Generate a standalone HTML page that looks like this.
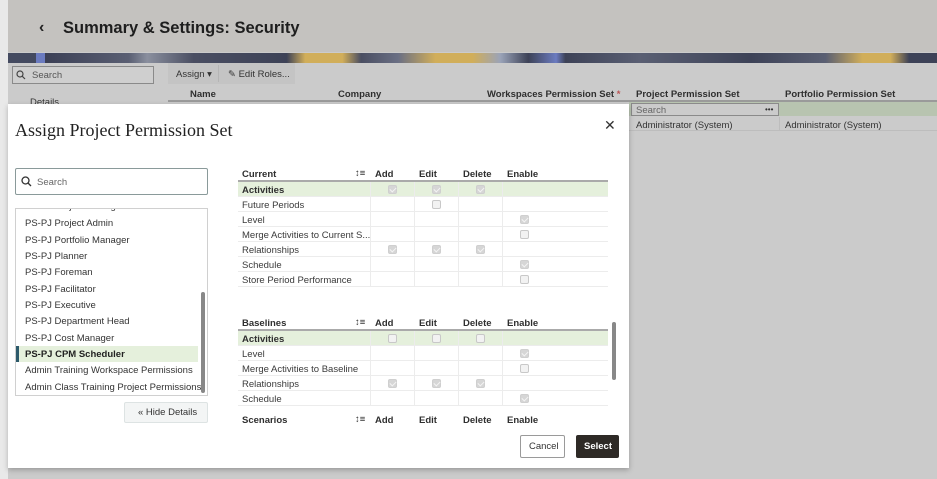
<!DOCTYPE html>
<html><head><meta charset="utf-8"><style>
*{box-sizing:border-box;margin:0;padding:0}
body{width:937px;height:479px;overflow:hidden;background:#cbcbcb;font-family:"Liberation Sans",sans-serif;position:relative}
.a{position:absolute}
.t{font-size:9.5px;color:#3a3a3a;white-space:nowrap}
.b{font-weight:bold;color:#2f2f2f}
.cb{position:absolute;width:9px;height:9px;border:1px solid #c8c8c8;border-radius:2px;background:#f2f2f2}
.cb.k{background:#d6d6d6;border-color:#cfcfcf}
.cb.k:after{content:"";position:absolute;left:2px;top:0px;width:3px;height:5px;border:solid #f4f4f4;border-width:0 1.3px 1.3px 0;transform:rotate(45deg)}
.row{position:absolute;left:238px;width:370px;height:15px;border-bottom:1px solid #ececec}
.li{position:absolute;left:25px;font-size:9.5px;color:#333;white-space:nowrap}
</style></head><body>
<div class="a" style="left:0;top:0;width:8px;height:479px;background:#e9e9e9"></div>
<div class="a" style="left:8px;top:0;width:929px;height:52px;background:#c4c2bf"></div>
<div class="a" style="left:39px;top:19px;font-size:16px;font-weight:bold;color:#222">‹</div>
<div class="a" style="left:63px;top:19px;font-size:16.5px;font-weight:bold;color:#1e1e1e">Summary &amp; Settings: Security</div>
<div class="a" style="left:8px;top:53px;width:929px;height:10px;background:linear-gradient(90deg,#444a60 0,#444a60 3%,#6b7bc0 3%,#6b7bc0 4%,#3b3f55 4%,#5a5f73 13%,#8a8f9e 15%,#4a4e62 20%,#3d4257 30%,#d1ae5a 32%,#d1ae5a 36%,#4a4e62 38%,#6a6f84 42%,#d1ae5a 46%,#d1ae5a 50%,#9aa3b8 53%,#3d4257 56%,#6b7bc0 59%,#3d4257 60%,#5a5f73 68%,#3d4257 80%,#5a5f73 88%,#d1ae5a 92%,#d1ae5a 95%,#3d4257 97%)"></div>
<div class="a" style="left:12px;top:66px;width:142px;height:18px;border:1px solid #8a8a8a;background:#cfcfcf"></div>
<svg class="a" style="left:16px;top:70px" width="10" height="10"><circle cx="4" cy="4" r="3" fill="none" stroke="#444" stroke-width="1.2"/><line x1="6.2" y1="6.2" x2="9" y2="9" stroke="#444" stroke-width="1.2"/></svg>
<div class="a t" style="left:32px;top:70px;color:#555">Search</div>
<div class="a" style="left:168px;top:63px;width:127px;height:21px;background:#c4c4c4"></div>
<div class="a t" style="left:176px;top:69px;color:#333">Assign ▾</div>
<div class="a" style="left:218px;top:65px;width:1px;height:17px;background:#b5b5b5"></div>
<div class="a t" style="left:228px;top:69px;color:#333">✎ Edit Roles...</div>
<div class="a t" style="left:30px;top:97px;color:#333">Details</div>
<div class="a t b" style="left:190px;top:89px">Name</div>
<div class="a t b" style="left:338px;top:89px">Company</div>
<div class="a t b" style="left:487px;top:89px">Workspaces Permission Set <span style="color:#b55">*</span></div>
<div class="a t b" style="left:636px;top:89px">Project Permission Set</div>
<div class="a t b" style="left:785px;top:89px">Portfolio Permission Set</div>
<div class="a" style="left:168px;top:100px;width:769px;height:2px;background:#9a9a9a"></div>
<div class="a" style="left:629px;top:102px;width:308px;height:14px;background:#b8c4b0"></div>
<div class="a" style="left:631px;top:103px;width:148px;height:13px;border:1px solid #8a8a8a;background:#cbcbcb"></div>
<div class="a t" style="left:636px;top:105px;color:#666">Search</div>
<div class="a t" style="left:765px;top:105px;color:#333;font-size:8px">•••</div>
<div class="a" style="left:629px;top:117px;width:308px;height:14px;border-bottom:1px solid #bdbdbd"></div>
<div class="a t" style="left:636px;top:120px;color:#333">Administrator (System)</div>
<div class="a t" style="left:785px;top:120px;color:#333">Administrator (System)</div>
<div class="a" style="left:779px;top:117px;width:1px;height:14px;background:#bdbdbd"></div>

<!-- modal -->
<div class="a" style="left:8px;top:104px;width:621px;height:364px;background:#fff;box-shadow:0 2px 5px rgba(0,0,0,.25)"></div>
<div class="a" style="left:15px;top:120px;font-family:'Liberation Serif',serif;font-size:18px;color:#222">Assign Project Permission Set</div>
<div class="a" style="left:604px;top:117px;font-size:14px;color:#333">✕</div>

<div class="a" style="left:15px;top:168px;width:193px;height:27px;border:1px solid #8a9a9a;border-radius:2px"></div>
<svg class="a" style="left:21px;top:176px" width="11" height="11"><circle cx="4.5" cy="4.5" r="3.5" fill="none" stroke="#333" stroke-width="1.3"/><line x1="7" y1="7" x2="10" y2="10" stroke="#333" stroke-width="1.3"/></svg>
<div class="a t" style="left:37px;top:177px;color:#666">Search</div>

<div class="a" style="left:15px;top:208px;width:193px;height:188px;border:1px solid #d0d0d0;overflow:hidden">
<div class="li" style="left:9px;top:-8px">PS-PJ Project Manager</div>
</div>
<div class="li" style="top:218px">PS-PJ Project Admin</div>
<div class="li" style="top:235px">PS-PJ Portfolio Manager</div>
<div class="li" style="top:251px">PS-PJ Planner</div>
<div class="li" style="top:267px">PS-PJ Foreman</div>
<div class="li" style="top:284px">PS-PJ Facilitator</div>
<div class="li" style="top:300px">PS-PJ Executive</div>
<div class="li" style="top:316px">PS-PJ Department Head</div>
<div class="li" style="top:333px">PS-PJ Cost Manager</div>
<div class="a" style="left:16px;top:346px;width:182px;height:16px;background:#e5f0dc;border-left:3px solid #2d5a6b"></div>
<div class="li" style="top:349px;font-weight:bold;color:#222">PS-PJ CPM Scheduler</div>
<div class="li" style="top:365px">Admin Training Workspace Permissions</div>
<div class="li" style="top:382px">Admin Class Training Project Permissions</div>
<div class="a" style="left:201px;top:292px;width:4px;height:101px;background:#888;border-radius:2px"></div>

<div class="a" style="left:124px;top:402px;width:84px;height:21px;border:1px solid #dde3e3;background:#f3f5f5;border-radius:2px"></div>
<div class="a t" style="left:138px;top:407px;color:#333">« Hide Details</div>

<!-- Current table -->
<div class="a t b" style="left:242px;top:169px">Current</div>
<div class="a t" style="left:355px;top:168px;color:#333">↕≡</div>
<div class="a t b" style="left:375px;top:169px">Add</div>
<div class="a t b" style="left:419px;top:169px">Edit</div>
<div class="a t b" style="left:463px;top:169px">Delete</div>
<div class="a t b" style="left:507px;top:169px">Enable</div>
<div class="a" style="left:238px;top:180px;width:370px;height:2px;background:#aaa"></div>
<div class="a" style="left:238px;top:182px;width:370px;height:15px;background:#e5f0dc"></div>
<div class="row" style="top:182px"></div>
<div class="row" style="top:197px"></div>
<div class="row" style="top:212px"></div>
<div class="row" style="top:227px"></div>
<div class="row" style="top:242px"></div>
<div class="row" style="top:257px"></div>
<div class="row" style="top:272px"></div>
<div class="a" style="left:370px;top:182px;width:1px;height:105px;background:#ececec"></div>
<div class="a" style="left:414px;top:182px;width:1px;height:105px;background:#ececec"></div>
<div class="a" style="left:458px;top:182px;width:1px;height:105px;background:#ececec"></div>
<div class="a" style="left:502px;top:182px;width:1px;height:105px;background:#ececec"></div>
<div class="a t b" style="left:242px;top:185px">Activities</div>
<div class="a t" style="left:242px;top:200px">Future Periods</div>
<div class="a t" style="left:242px;top:215px">Level</div>
<div class="a t" style="left:242px;top:230px">Merge Activities to Current S...</div>
<div class="a t" style="left:242px;top:245px">Relationships</div>
<div class="a t" style="left:242px;top:260px">Schedule</div>
<div class="a t" style="left:242px;top:275px">Store Period Performance</div>
<div class="cb k" style="left:388px;top:185px"></div><div class="cb k" style="left:432px;top:185px"></div><div class="cb k" style="left:476px;top:185px"></div>
<div class="cb" style="left:432px;top:200px"></div>
<div class="cb k" style="left:520px;top:215px"></div>
<div class="cb" style="left:520px;top:230px"></div>
<div class="cb k" style="left:388px;top:245px"></div><div class="cb k" style="left:432px;top:245px"></div><div class="cb k" style="left:476px;top:245px"></div>
<div class="cb k" style="left:520px;top:260px"></div>
<div class="cb" style="left:520px;top:275px"></div>

<!-- Baselines -->
<div class="a t b" style="left:242px;top:318px">Baselines</div>
<div class="a t" style="left:355px;top:317px;color:#333">↕≡</div>
<div class="a t b" style="left:375px;top:318px">Add</div>
<div class="a t b" style="left:419px;top:318px">Edit</div>
<div class="a t b" style="left:463px;top:318px">Delete</div>
<div class="a t b" style="left:507px;top:318px">Enable</div>
<div class="a" style="left:238px;top:329px;width:370px;height:2px;background:#aaa"></div>
<div class="a" style="left:238px;top:331px;width:370px;height:15px;background:#e5f0dc"></div>
<div class="row" style="top:331px"></div>
<div class="row" style="top:346px"></div>
<div class="row" style="top:361px"></div>
<div class="row" style="top:376px"></div>
<div class="row" style="top:391px"></div>
<div class="a" style="left:370px;top:331px;width:1px;height:75px;background:#ececec"></div>
<div class="a" style="left:414px;top:331px;width:1px;height:75px;background:#ececec"></div>
<div class="a" style="left:458px;top:331px;width:1px;height:75px;background:#ececec"></div>
<div class="a" style="left:502px;top:331px;width:1px;height:75px;background:#ececec"></div>
<div class="a t b" style="left:242px;top:334px">Activities</div>
<div class="a t" style="left:242px;top:349px">Level</div>
<div class="a t" style="left:242px;top:364px">Merge Activities to Baseline</div>
<div class="a t" style="left:242px;top:379px">Relationships</div>
<div class="a t" style="left:242px;top:394px">Schedule</div>
<div class="cb" style="left:388px;top:334px"></div><div class="cb" style="left:432px;top:334px"></div><div class="cb" style="left:476px;top:334px"></div>
<div class="cb k" style="left:520px;top:349px"></div>
<div class="cb" style="left:520px;top:364px"></div>
<div class="cb k" style="left:388px;top:379px"></div><div class="cb k" style="left:432px;top:379px"></div><div class="cb k" style="left:476px;top:379px"></div>
<div class="cb k" style="left:520px;top:394px"></div>
<div class="a" style="left:612px;top:322px;width:4px;height:58px;background:#888;border-radius:2px"></div>

<div class="a t b" style="left:242px;top:415px">Scenarios</div>
<div class="a t" style="left:355px;top:414px;color:#333">↕≡</div>
<div class="a t b" style="left:375px;top:415px">Add</div>
<div class="a t b" style="left:419px;top:415px">Edit</div>
<div class="a t b" style="left:463px;top:415px">Delete</div>
<div class="a t b" style="left:507px;top:415px">Enable</div>

<div class="a" style="left:520px;top:435px;width:45px;height:23px;border:1px solid #9a9a9a;border-radius:2px;background:#fff"></div>
<div class="a t" style="left:529px;top:441px;color:#333">Cancel</div>
<div class="a" style="left:576px;top:435px;width:43px;height:23px;background:#2e2a26;border-radius:2px"></div>
<div class="a t" style="left:584px;top:441px;color:#fff;font-weight:bold">Select</div>
</body></html>
